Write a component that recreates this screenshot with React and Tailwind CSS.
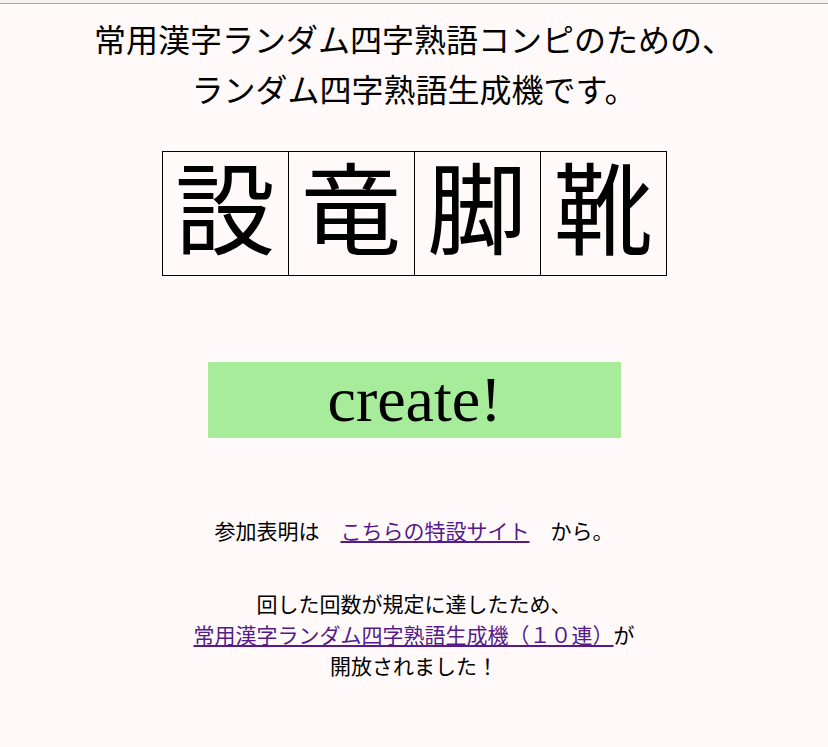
import React from 'react';

const jp = { fontFamily: '"Liberation Serif", "Noto Sans CJK JP", serif' };
const sp = '\u3000';

export default function App() {
  const chars = ['設', '竜', '脚', '靴'];

  return (
    <div className="min-h-screen bg-[#fffaf9] text-black" style={jp}>
      {/* top edge */}
      <div className="h-[4px] bg-[#f4f2f2] border-b border-[#a9a9a9]" />

      {/* Title */}
      <h1 className="pt-[12px] text-center text-[32px] leading-[50px] font-normal">
        常用漢字ランダム四字熟語コンピのための、
        <br />
        ランダム四字熟語生成機です。
      </h1>

      {/* Result */}
      <div className="mt-[35px] flex justify-center">
        <div className="flex border-t border-l border-black">
          {chars.map((c) => (
            <div
              key={c}
              className="w-[126px] h-[124px] border-r border-b border-black flex items-center justify-center text-[100px] leading-none"
            >
              {c}
            </div>
          ))}
        </div>
      </div>

      {/* Button */}
      <div className="mt-[86px] flex justify-center">
        <button className="w-[413px] h-[76px] bg-[#a6ec9b] text-[64px] leading-none ml-[1px]" style={jp}>
          create!
        </button>
      </div>

      {/* Links */}
      <p className="mt-[79px] text-center text-[21px] leading-[31px]">
        {'参加表明は' + sp}
        <a href="#" className="underline text-[#551a8b]">こちらの特設サイト</a>
        {sp + 'から。'}
      </p>

      <p className="mt-[42px] text-center text-[21px] leading-[31px]">
        回した回数が規定に達したため、
        <br />
        <a href="#" className="underline text-[#551a8b]">常用漢字ランダム四字熟語生成機（１０連）</a>
        が
        <br />
        開放されました！
      </p>
    </div>
  );
}
